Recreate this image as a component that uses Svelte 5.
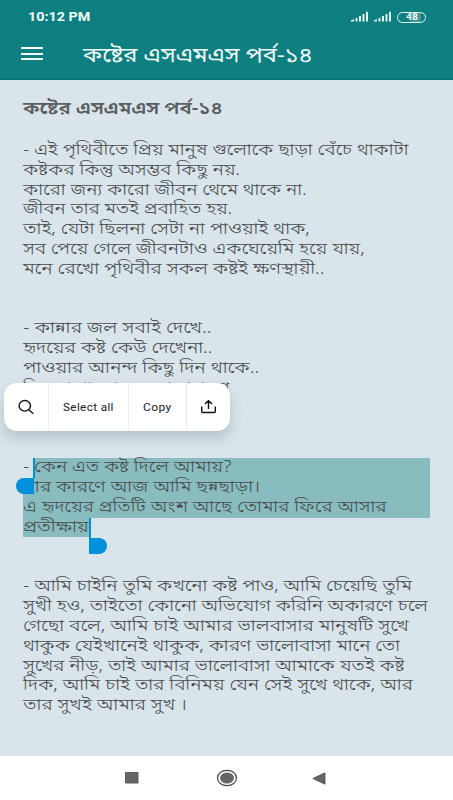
<script>
  // Each line carries its rendered width in pixels; glyphs are stretched to fill it.
  const verse = [
    ['- এই পৃথিবীতে প্রিয় মানুষ গুলোকে ছাড়া বেঁচে থাকাটা', 385],
    ['কষ্টকর কিন্তু অসম্ভব কিছু নয়.', 217],
    ['কারো জন্য কারো জীবন থেমে থাকে না.', 284],
    ['জীবন তার মতই প্রবাহিত হয়.', 209],
    ['তাই, যেটা ছিলনা সেটা না পাওয়াই থাক,', 287],
    ['সব পেয়ে গেলে জীবনটাও একঘেয়েমি হয়ে যায়,', 342],
    ['মনে রেখো পৃথিবীর সকল কষ্টই ক্ষণস্থায়ী..', 302],
    ['', 0],
    ['', 0],
    ['- কান্নার জল সবাই দেখে..', 188],
    ['হৃদয়ের কষ্ট কেউ দেখেনা..', 190],
    ['পাওয়ার আনন্দ কিছু দিন থাকে..', 236],
    ['কিন্তু না পাওয়ার বেদনা সারাক্ষণ', 206],
    ['', 0],
    ['', 0],
    ['', 0],
    ['- কেন এত কষ্ট দিলে আমায়?', 209],
    ['যার কারণে আজ আমি ছন্নছাড়া।', 237],
    ['এ হৃদয়ের প্রতিটি অংশ আছে তোমার ফিরে আসার', 364],
    ['প্রতীক্ষায়', 66],
    ['', 0],
    ['', 0],
    ['- আমি চাইনি তুমি কখনো কষ্ট পাও, আমি চেয়েছি তুমি', 389],
    ['সুখী হও, তাইতো কোনো অভিযোগ করিনি অকারণে চলে', 405],
    ['গেছো বলে, আমি চাই আমার ভালবাসার মানুষটি সুখে', 385],
    ['থাকুক যেইখানেই থাকুক, কারণ ভালোবাসা মানে তো', 377],
    ['সুখের নীড়, তাই আমার ভালোবাসা আমাকে যতই কষ্ট', 381],
    ['দিক, আমি চাই তার বিনিময় যেন সেই সুখে থাকে, আর', 390],
    ['তার সুখই আমার সুখ ।', 164]
  ];

  function fit(node, width) {
    const apply = () => {
      const natural = node.offsetWidth;
      if (natural) node.style.transform = `scaleX(${width / natural})`;
    };
    apply();
    document.fonts.ready.then(apply);
  }
</script>

<div class="screen">
  <header>
    <div class="status">
      <span class="clock"><span class="fit" use:fit={62}>10:12 PM</span></span>
      <svg class="signal" width="18" height="11" viewBox="0 0 18 11" fill="#e4f3f2">
        <path d="M0 10.500v-1.200l3-1v2.200zM4.500 7h2v3.500h-2zM8 5h2v5.500h-2zM11.500 3h2v7.500h-2zM15 .8h2v9.700h-2z" />
      </svg>
      <svg class="signal second" width="18" height="11" viewBox="0 0 18 11" fill="#e4f3f2">
        <path d="M0 10.500v-1.200l3-1v2.200zM4.500 7h2v3.500h-2zM8 5h2v5.500h-2zM11.500 3h2v7.500h-2zM15 .8h2v9.700h-2z" />
      </svg>
      <span class="battery"><span>48</span></span>
    </div>
    <div class="bar">
      <span class="menu"><i></i><i></i><i></i></span>
      <h1><span class="fit" use:fit={230}>কষ্টের এসএমএস পর্ব-১৪</span></h1>
    </div>
  </header>

  <main>
    <h2><span class="fit" use:fit={200}>কষ্টের এসএমএস পর্ব-১৪</span></h2>
    <div class="verse">
      <div class="highlight first"></div>
      <div class="highlight last"></div>
      <div class="lines">
        {#each verse as [text, width]}
          <p>{#if text}<span class="fit" use:fit={width}>{text}</span>{/if}</p>
        {/each}
      </div>
      <div class="caret start"></div>
      <div class="caret end"></div>
      <div class="handle left"></div>
      <div class="handle right"></div>
    </div>
  </main>

  <div class="popup">
    <span class="cell search">
      <svg width="18" height="16" viewBox="0 0 18 16" fill="none" stroke="#111" stroke-width="1.400">
        <ellipse cx="6.800" cy="6.800" rx="5.700" ry="5.300" /><path d="M11 11l4.300 3.700" />
      </svg>
    </span>
    <span class="cell all"><span class="fit" use:fit={50.5}>Select all</span></span>
    <span class="cell copy"><span class="fit" use:fit={29}>Copy</span></span>
    <span class="cell share">
      <svg width="18" height="16" viewBox="0 0 18 16" fill="none" stroke="#111" stroke-width="1.400">
        <path d="M1.700 7.500v5q0 1 1 1h11.600q1 0 1-1v-5M8.500 10V2M4.900 5l3.600-3.200L12.100 5" />
      </svg>
    </span>
  </div>

  <nav>
    <svg width="14" height="12" viewBox="0 0 14 12"><path d="M.5 .5h12.500v10.500H.5z" fill="#666" stroke="#5a5a5a" /></svg>
    <svg width="22" height="18" viewBox="0 0 22 18">
      <ellipse cx="11" cy="9" rx="9.500" ry="7.700" fill="none" stroke="#444" stroke-width="1.200" />
      <ellipse cx="11" cy="9" rx="7" ry="5.600" fill="#666" />
    </svg>
    <svg width="14" height="13" viewBox="0 0 14 13"><path d="M.8 6.500L13 .8v11.400z" fill="#666" stroke="#4c4c4c" stroke-width=".8" /></svg>
  </nav>
</div>

<style>
  :global(body) { margin: 0; }
  .screen {
    position: relative;
    display: flex;
    flex-direction: column;
    width: 453px;
    height: 800px;
    overflow: hidden;
    background: #dae5eb;
    font-family: "Noto Sans Bengali", "Noto Sans", sans-serif;
    color: #484c4e;
  }
  .fit { display: inline-block; white-space: nowrap; transform-origin: 0 50%; }
  header { height: 80px; background: #0e7f80; box-shadow: inset 0 -1px #087073; color: #f2fbfa; }
  .status { display: flex; align-items: center; height: 34px; padding-left: 28px; }
  .clock { width: 323px; font: 700 12px Roboto, sans-serif; }
  .signal { margin-bottom: 1px; }
  .second { margin-left: 5px; }
  .battery {
    display: flex;
    align-items: center;
    justify-content: center;
    box-sizing: border-box;
    width: 29px;
    height: 11px;
    margin-left: 5px;
    border: 1px solid #e4f3f2;
    border-radius: 6px;
    background: linear-gradient(90deg, #0e7f80 45%, #3f9796 45%, #3f9796 85%, #0e7f80 85%);
    font: 700 8.500px Roboto, sans-serif;
  }
  .battery span { transform: scaleX(1.200); }
  .bar { display: flex; height: 46px; padding-left: 21px; }
  .menu { display: flex; flex-direction: column; gap: 3.500px; width: 62px; padding-top: 13px; }
  .menu i { width: 22px; height: 2px; background: #f2fbfa; }
  h1, h2, p { margin: 0; }
  h1 { padding-top: 8px; font-size: 20px; font-weight: 400; line-height: 30px; }
  main { flex: 1; padding: 17px 23px 0; }
  h2 { height: 42px; padding-top: 1px; box-sizing: border-box; font-size: 17.500px; font-weight: 600; line-height: 24px; color: #5a5e60; }
  .verse { position: relative; font-size: 16px; font-weight: 300; }
  .lines { position: relative; padding-top: 3px; }
  p { height: 19.830px; line-height: 19.830px; }
  .highlight { position: absolute; background: #88bcbe; }
  .highlight.first { left: 11px; top: 319px; width: 396px; height: 59.500px; }
  .highlight.last { left: 0; top: 339px; width: 67px; height: 59px; }
  .caret { position: absolute; width: 1.500px; background: #0090dd; }
  .caret.start { left: 10px; top: 319px; height: 20px; }
  .caret.end { left: 66px; top: 379px; height: 20px; }
  .handle { position: absolute; width: 18px; height: 16px; background: #0090dd; }
  .handle.left { left: -7px; top: 339px; border-radius: 8px 0 0 8px; }
  .handle.right { left: 66px; top: 398.500px; border-radius: 0 8px 8px 0; }
  .popup {
    position: absolute;
    left: 4px;
    top: 383px;
    display: flex;
    width: 226px;
    height: 48px;
    border-radius: 13px;
    background: #fff;
    box-shadow: 0 7px 14px rgba(40, 70, 80, .22);
    color: #222;
    font: 400 10px Roboto, sans-serif;
    letter-spacing: .3px;
  }
  .cell { display: flex; align-items: center; box-sizing: border-box; border-right: 1px solid #ececec; }
  .search { width: 45px; padding-left: 14px; }
  .all { width: 80px; padding-left: 14px; }
  .copy { width: 58px; padding-left: 14px; }
  .share { flex: 1; padding-left: 13px; border: 0; }
  nav { display: flex; align-items: center; gap: 84px; height: 44px; padding-left: 125px; background: #fff; }
  nav svg:nth-child(2) { margin: 0 -7.500px; }
  nav svg:nth-child(3) { margin-left: -2px; }
</style>
